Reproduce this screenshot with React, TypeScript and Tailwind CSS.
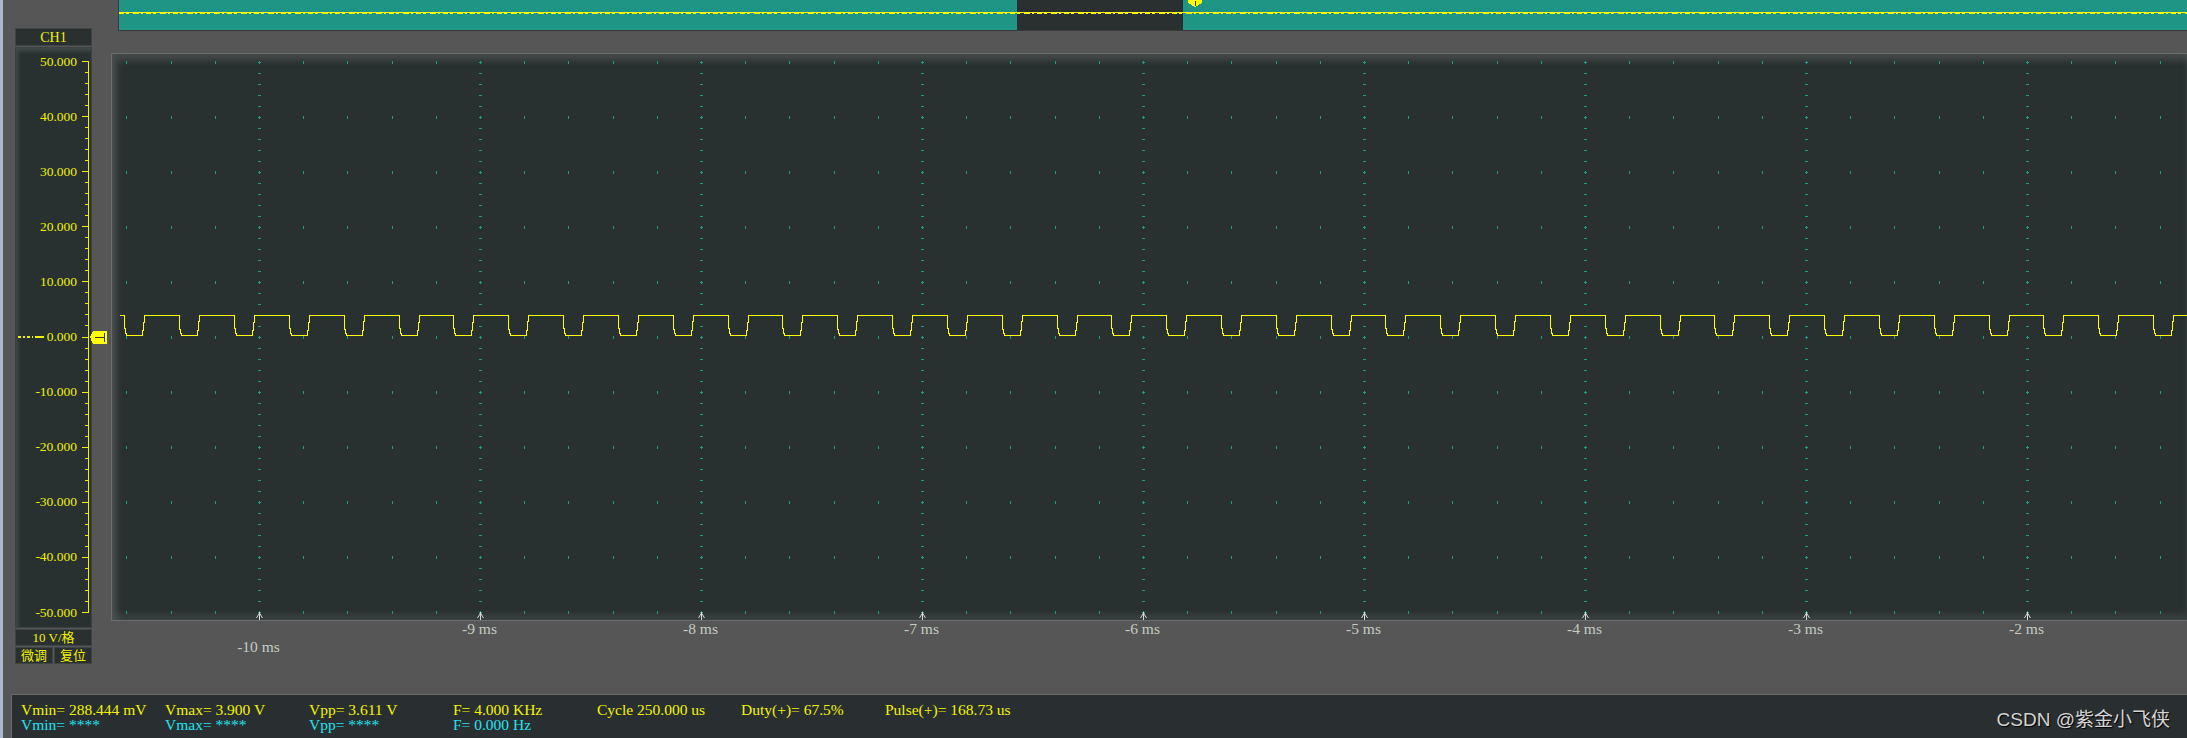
import React from "react";

const AXIS_LABELS = [
  "50.000",
  "40.000",
  "30.000",
  "20.000",
  "10.000",
  "0.000",
  "-10.000",
  "-20.000",
  "-30.000",
  "-40.000",
  "-50.000",
];

const TIME_LABELS = ["-10 ms", "-9 ms", "-8 ms", "-7 ms", "-6 ms", "-5 ms", "-4 ms", "-3 ms", "-2 ms"];

const MEASURES: { top: string; bottom?: string }[] = [
  { top: "Vmin= 288.444 mV", bottom: "Vmin= ****" },
  { top: "Vmax= 3.900 V", bottom: "Vmax= ****" },
  { top: "Vpp= 3.611 V", bottom: "Vpp= ****" },
  { top: "F= 4.000 KHz", bottom: "F= 0.000 Hz" },
  { top: "Cycle 250.000 us" },
  { top: "Duty(+)= 67.5%" },
  { top: "Pulse(+)= 168.73 us" },
];

const PLOT_W = 2075;
const PLOT_H = 566;
const GRID = "#1d9c89";

const majorX = Array.from({ length: 9 }, (_, k) => Math.round(147 + 221 * k));
const minorX = Array.from({ length: 50 }, (_, m) => Math.round(147 + 44.2 * (m - 3))).filter(
  (x) => x > 4 && x < PLOT_W - 2
);
const rowsY = Array.from({ length: 11 }, (_, j) => Math.round(8 + 55.02 * j));

function buildWave() {
  const H = 261.5;
  const L = 281.5;
  let d = `M 8 ${H}`;
  for (let k = 0; k < 40; k++) {
    const x0 = Math.round(12.4 + 54.83 * k) + 0.5;
    if (x0 > PLOT_W + 5) break;
    const j = k % 3 === 1 ? 1 : 0;
    d += ` L ${x0} ${H} L ${x0} ${H + 13 + j} L ${x0 + 1} ${H + 13 + j} L ${x0 + 1} ${H + 18} L ${x0 + 2} ${H + 18} L ${x0 + 2} ${L}`;
    d += ` L ${x0 + 18} ${L} L ${x0 + 18} ${L - 5} L ${x0 + 19} ${L - 5} L ${x0 + 19} ${L - 13 - j} L ${x0 + 20} ${L - 13 - j} L ${x0 + 20} ${H}`;
  }
  d += ` L ${PLOT_W + 10} ${H}`;
  return d;
}

const WAVE = buildWave();

function PlotGrid() {
  return (
    <svg width={PLOT_W} height={PLOT_H} className="block" shapeRendering="crispEdges">
      {rowsY.map((y) =>
        minorX
          .filter((x) => !majorX.includes(x))
          .map((x) => <rect key={`${x}-${y}`} x={x} y={y - 1} width={1} height={3} fill={GRID} />)
      )}
      {majorX.map((x) => (
        <g key={x}>
          {rowsY.map((y) => (
            <g key={y}>
              <rect x={x - 1} y={y} width={3} height={1} fill={GRID} />
              <rect x={x} y={y - 1} width={1} height={3} fill={GRID} />
            </g>
          ))}
          {rowsY.slice(0, 10).map((y) =>
            [1, 2, 3, 4].map((s) => (
              <rect key={`${y}-${s}`} x={x - 1} y={Math.round(y + 11.004 * s)} width={3} height={1} fill={GRID} />
            ))
          )}
          <path
            d={`M ${x + 0.5} 558 L ${x + 0.5} 566 M ${x + 0.5} 559 L ${x - 2.5} 564 M ${x + 0.5} 559 L ${x + 3.5} 564`}
            stroke="#d6d6d6"
            strokeWidth={1}
            fill="none"
            shapeRendering="auto"
          />
        </g>
      ))}
      <path d={WAVE} stroke="#ffff00" strokeWidth={1} fill="none" />
    </svg>
  );
}

function AxisScale() {
  const ticks: number[] = [];
  for (let i = 0; i <= 50; i++) ticks.push(Math.round(13 + 11.02 * i));
  return (
    <svg width={75} height={579} className="block">
      <g shapeRendering="crispEdges" fill="#f0f000">
        <rect x={72} y={13} width={1} height={552} />
        {ticks.map((y, i) =>
          i % 5 === 0 ? (
            <rect key={i} x={66} y={y} width={7} height={1} />
          ) : (
            <rect key={i} x={69} y={y} width={3} height={1} />
          )
        )}
        {[
          [2, 5],
          [7, 9],
          [11, 14],
          [16, 17],
          [19, 28],
        ].map(([a, b]) => (
          <rect key={a} x={a} y={288} width={b - a} height={2} />
        ))}
      </g>
      {AXIS_LABELS.map((t, i) => (
        <text
          key={t}
          x={61}
          y={17.5 + 55.1 * i}
          textAnchor="end"
          fontSize={13.5}
          fill="#f0f000"
          fontFamily="'Liberation Serif', serif"
        >
          {t}
        </text>
      ))}
    </svg>
  );
}

function OverviewLine() {
  return (
    <svg width={2068} height={30} className="absolute inset-0" shapeRendering="crispEdges">
      <rect x={0} y={12} width={2068} height={1} fill="#ffff00" />
      <line x1={0} y1={13.5} x2={2068} y2={13.5} stroke="#ffff00" strokeDasharray="5 2 3 4 6 2 2 3" />
      <path d="M1069 0 L1083 0 L1083 3 L1076 7 L1069 3 Z" fill="#ffff00" />
      <rect x={1076} y={1} width={1} height={5} fill="#2a2f30" />
    </svg>
  );
}

function ChannelMarker() {
  return (
    <svg width={18} height={14} className="absolute left-[90px] top-[331px]" shapeRendering="crispEdges">
      <path d="M0 6 L3 0 L17 0 L17 13 L3 13 Z" fill="#ffff00" />
      <rect x={5} y={6} width={10} height={1} fill="#3a3a2a" />
      <rect x={14} y={2} width={1} height={9} fill="#3a3a2a" />
    </svg>
  );
}

export default function App() {
  const panelBox = "border border-[#3f4545] bg-[#2a3030]";
  return (
    <div className="relative flex h-[738px] w-[2187px] overflow-hidden bg-[#565656] font-['Liberation_Serif','Noto_Sans_CJK_SC',serif]">
      <div className="w-[3px] shrink-0 bg-[#a9b9cd]" />
      <div className="flex min-w-0 flex-1 flex-col">
        <div className="flex h-[694px] shrink-0">
          <div className="ml-[12px] flex w-[77px] shrink-0 flex-col pt-[28px] text-[#f2f200]">
            <div className={`flex h-[18px] items-center justify-center text-[14px] ${panelBox}`}>CH1</div>
            <div className="mt-px h-[581px] border border-[#3c4141] bg-[#293030] shadow-[inset_2px_3px_4px_rgba(120,125,125,0.35)]">
              <AxisScale />
            </div>
            <div className={`mt-px flex h-[17px] items-center justify-center text-[13px] leading-none ${panelBox}`}>
              10 V/格
            </div>
            <div className="mt-px flex h-[17px] gap-px text-[13px] leading-none">
              <div className={`flex flex-1 items-center justify-center ${panelBox}`}>微调</div>
              <div className={`flex flex-1 items-center justify-center ${panelBox}`}>复位</div>
            </div>
          </div>

          <div className="ml-[19px] flex min-w-0 flex-1 flex-col">
            <div className="relative ml-[7px] flex h-[31px] border-b border-l border-[#3a3a3a]">
              <div className="w-[898px] bg-[#1f9585]" />
              <div className="w-[166px] bg-[#2a2f30]" />
              <div className="flex-1 bg-[#1f9585]" />
              <OverviewLine />
            </div>
            <div className="mt-[22px] h-[568px] border-y border-l border-[#6a6e6e] bg-[#293030] shadow-[inset_5px_6px_7px_rgba(110,115,115,0.4),inset_0_-6px_6px_rgba(90,95,95,0.35)]">
              <PlotGrid />
            </div>
            <div className="flex items-start pl-[37px] text-[15.5px] leading-[16px] text-[#c4ccc4]">
              {TIME_LABELS.map((t, i) => (
                <div key={t} className={`w-[221px] shrink-0 text-center ${i === 0 ? "mt-[18px]" : ""}`}>
                  {t}
                </div>
              ))}
            </div>
          </div>
        </div>

        <div className="ml-[8px] flex h-[44px] border-l border-t border-[#6b6b6b] bg-[#292f30] pl-[9px] pt-[7px]">
          {MEASURES.map((m) => (
            <div key={m.top} className="flex w-[144px] shrink-0 flex-col text-[15.5px] leading-[15px]">
              <span className="whitespace-nowrap text-[#f4f400]">{m.top}</span>
              {m.bottom && <span className="whitespace-nowrap text-[#22e4f2]">{m.bottom}</span>}
            </div>
          ))}
          <div className="ml-auto self-center pr-[17px] font-['Liberation_Sans','Noto_Sans_CJK_SC',sans-serif] text-[19px] text-[#d4d4d4] [text-shadow:1px_1px_1px_#000]">
            CSDN @紫金小飞侠
          </div>
        </div>
      </div>
      <ChannelMarker />
    </div>
  );
}
